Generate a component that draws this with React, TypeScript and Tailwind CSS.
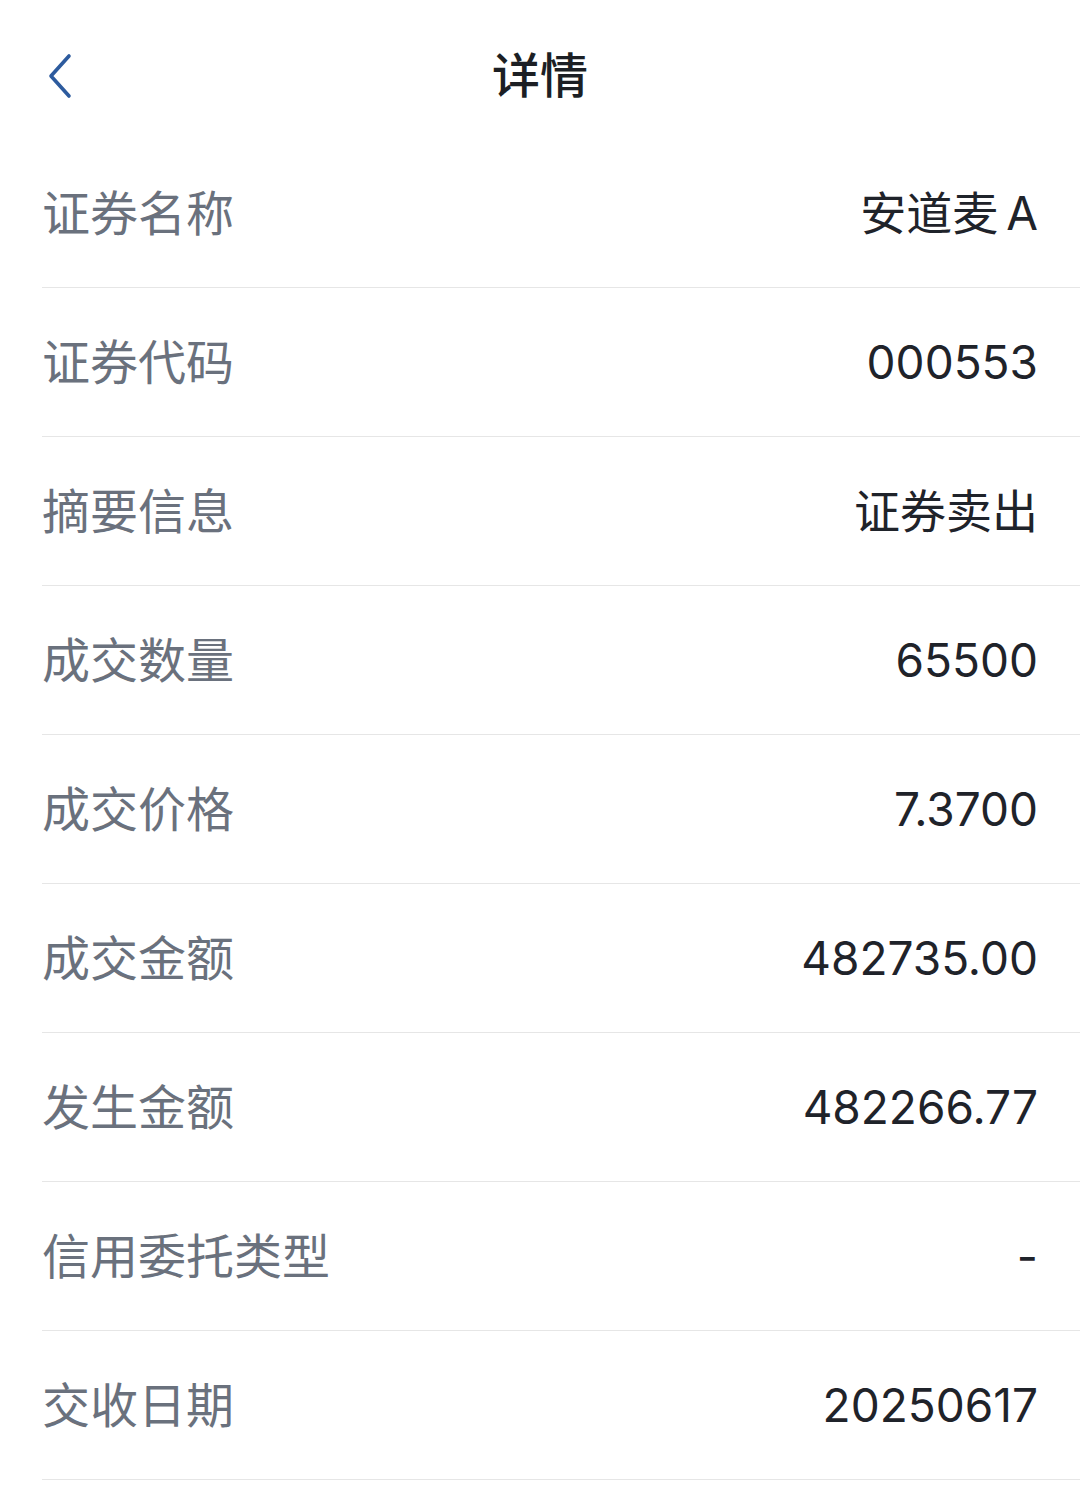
import React from 'react'

const rows = [
  { label: '证券名称', value: '安道麦', suffix: 'A' },
  { label: '证券代码', value: '000553' },
  { label: '摘要信息', value: '证券卖出' },
  { label: '成交数量', value: '65500' },
  { label: '成交价格', value: '7.3700' },
  { label: '成交金额', value: '482735.00' },
  { label: '发生金额', value: '482266.77' },
  { label: '信用委托类型', value: '-' },
  { label: '交收日期', value: '20250617' },
]

const font = { fontFamily: '"Noto Sans", "Noto Sans CJK SC", sans-serif' }
const valueFont = { fontFamily: 'Inter, "Noto Sans CJK SC", sans-serif' }

export default function App() {
  return (
    <div className="min-h-[1499px] w-[1080px] bg-white" style={font}>
      {/* 顶部导航 */}
      <header className="relative flex h-[139px] items-center justify-center">
        <button className="absolute left-[40px] top-[46px] flex h-[60px] w-[40px] items-center justify-center">
          <svg width="30" height="48" viewBox="0 0 30 48" fill="none">
            <path
              d="M24 4 L6 24 L24 44"
              stroke="#2d5b9e"
              strokeWidth="3.6"
              strokeLinecap="round"
              strokeLinejoin="round"
            />
          </svg>
        </button>
        <h1 className="mt-[10px] text-[48px] font-medium leading-none text-[#1c1f24]">详情</h1>
      </header>

      {/* 详情列表 */}
      <div className="pl-[42px]">
        {rows.map((row) => (
          <div
            key={row.label}
            className="flex h-[149px] items-center justify-between border-b border-[#e6e6e6] pr-[42px]"
          >
            <span className="text-[48px] leading-none text-[#6a717d]">{row.label}</span>
            <span className="text-[46px] leading-none text-[#1f232a]" style={valueFont}>
              {row.value}
              {row.suffix && <span className="ml-[8px]">{row.suffix}</span>}
            </span>
          </div>
        ))}
      </div>
    </div>
  )
}
